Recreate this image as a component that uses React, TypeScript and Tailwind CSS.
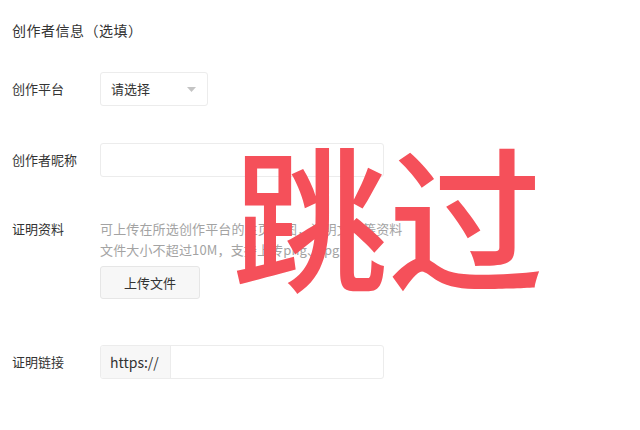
import React from "react";

const font = { fontFamily: '"Noto Sans CJK SC", "Liberation Sans", sans-serif' };

const Label: React.FC<{ text: string }> = ({ text }) => (
  <div className="w-[88px] shrink-0 text-[13px] text-[#333]">{text}</div>
);

const App: React.FC = () => {
  return (
    <div
      className="relative w-[640px] h-[430px] bg-white px-3 overflow-hidden"
      style={font}
    >
      <div className="pt-[19px] text-[14px] leading-[22px] text-[#333] tracking-[0.5px]">
        创作者信息（选填）
      </div>

      {/* 创作平台 */}
      <div className="flex items-center mt-[31px]">
        <Label text="创作平台" />
        <div className="flex items-center justify-between w-[108px] h-[34px] border border-[#ececec] rounded-[3px] pl-[10px] pr-[11px]">
          <span className="text-[13px] text-[#333]">请选择</span>
          <svg width="9" height="5" viewBox="0 0 9 5">
            <path d="M0 0h9L4.5 5z" fill="#c4c4c4" />
          </svg>
        </div>
      </div>

      {/* 创作者昵称 */}
      <div className="flex items-center mt-[37px]">
        <Label text="创作者昵称" />
        <div className="w-[284px] h-[34px] border border-[#ececec] rounded-[3px]" />
      </div>

      {/* 证明资料 */}
      <div className="flex mt-[41px]">
        <div className="w-[88px] shrink-0 text-[13px] leading-[21px] text-[#333]">
          证明资料
        </div>
        <div>
          <div className="text-[13px] leading-[21px] text-[#a3a3a3] tracking-[0.15px]">
            <div>可上传在所选创作平台的主页截图，证明文件等资料</div>
            <div>文件大小不超过10M，支持上传png、jpg</div>
          </div>
          <button className="mt-[6px] w-[100px] h-[33px] bg-[#f7f7f7] border border-[#e6e6e6] rounded-[3px] text-[13px] text-[#333]">
            上传文件
          </button>
        </div>
      </div>

      {/* 证明链接 */}
      <div className="flex items-center mt-[46px]">
        <Label text="证明链接" />
        <div className="flex w-[284px] h-[34px] border border-[#ececec] rounded-[3px] overflow-hidden">
          <div className="w-[70px] h-full flex items-center pl-[9px] bg-[#f7f7f7] border-r border-[#ececec] text-[14px] text-[#333]">
            https://
          </div>
          <div className="flex-1" />
        </div>
      </div>

      {/* 跳过 stamp */}
      <div className="absolute left-[232px] top-[134px] text-[156px] leading-none font-medium text-[#f5505a] whitespace-nowrap">
        跳过
      </div>
    </div>
  );
};

export default App;
